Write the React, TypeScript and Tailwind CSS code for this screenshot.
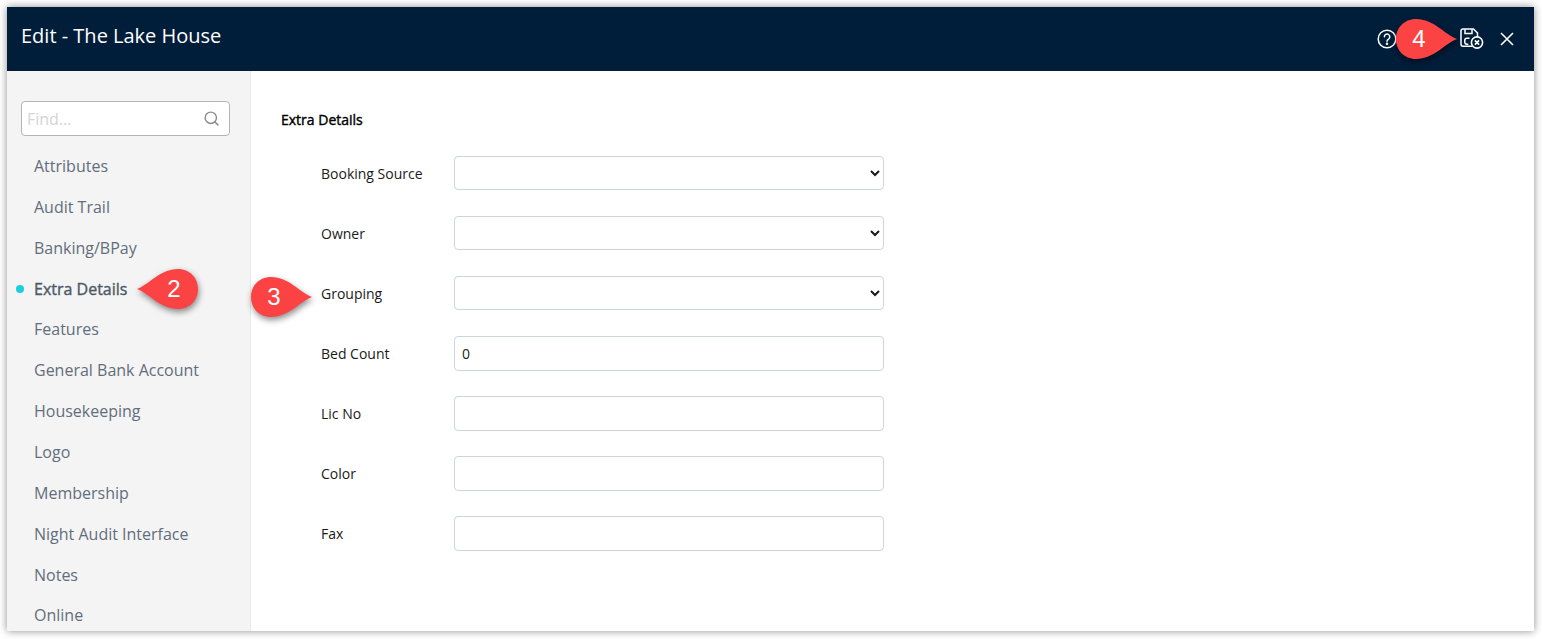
import { Search } from 'lucide-react';

const menuItems = [
  { label: 'Attributes', rowClass: 'h-[41px]' },
  { label: 'Audit Trail', rowClass: 'h-[41px]' },
  { label: 'Banking/BPay', rowClass: 'h-[41px]' },
  { label: 'Extra Details', rowClass: 'h-[40px] pt-[2px]', active: true },
  { label: 'Features', rowClass: 'h-[41px]' },
  { label: 'General Bank Account', rowClass: 'h-[41px]' },
  { label: 'Housekeeping', rowClass: 'h-[41px]' },
  { label: 'Logo', rowClass: 'h-[41px]' },
  { label: 'Membership', rowClass: 'h-[41px]' },
  { label: 'Night Audit Interface', rowClass: 'h-[41px]' },
  { label: 'Notes', rowClass: 'h-[40px] pt-[2px]' },
  { label: 'Online', rowClass: 'h-[41px]' },
];

const fields = [
  { label: 'Booking Source', type: 'select' },
  { label: 'Owner', type: 'select' },
  { label: 'Grouping', type: 'select' },
  { label: 'Bed Count', type: 'input', value: '0' },
  { label: 'Lic No', type: 'input' },
  { label: 'Color', type: 'input' },
  { label: 'Fax', type: 'input' },
];

// red teardrop marker used to annotate the screenshot
function Callout({ n, flip, className }: { n: number; flip?: boolean; className: string }) {
  return (
    <div className={`absolute h-[44px] w-[64px] ${className}`}>
      <svg width="64" height="44" viewBox="0 0 64 44" className="absolute inset-0 drop-shadow-[1px_3px_3px_rgba(0,0,0,0.45)]">
        <path
          d={
            flip
              ? 'M1 22 C14 17 24 2 42 2 C54 2 62 11 62 22 C62 33 54 42 42 42 C24 42 14 27 1 22 Z'
              : 'M63 22 C50 17 40 2 22 2 C10 2 2 11 2 22 C2 33 10 42 22 42 C40 42 50 27 63 22 Z'
          }
          fill="#fc4344"
        />
      </svg>
      <span
        className={`absolute top-0 flex h-[44px] w-[40px] items-center justify-center font-['Liberation_Sans',sans-serif] text-[24px] text-white ${
          flip ? 'left-[18px]' : 'left-[5px]'
        }`}
      >
        {n}
      </span>
    </div>
  );
}

function SaveCloseIcon() {
  return (
    <svg width="24" height="22" viewBox="0 0 24 22" fill="none" stroke="white" strokeWidth="1.5">
      <path d="M12 18.2H3a2 2 0 0 1-2-2V3a2 2 0 0 1 2-2h10.5L17.5 5v4" strokeLinejoin="round" />
      <path d="M5 1.2v4.3h7V1.2" />
      <path d="M9.5 10.2H6.8a2 2 0 0 0-2 2v2a2 2 0 0 0 2 2h1.5" />
      <circle cx="17" cy="14.5" r="5.6" strokeWidth="1.6" />
      <path d="M14.9 12.4l4.2 4.2M19.1 12.4l-4.2 4.2" strokeWidth="1.6" />
    </svg>
  );
}

export default function App() {
  return (
    <div className="relative h-[639px] w-[1542px] overflow-hidden bg-white pl-[7px] pt-[7px] font-['Open_Sans',sans-serif]">
      <div className="flex h-[624px] w-[1527px] flex-col bg-white shadow-[0_0_8px_rgba(0,0,0,0.45)]">
        {/* Header */}
        <div className="flex h-[64px] shrink-0 items-center justify-between bg-[#001d3a] pl-[14px] pr-[19px] text-white">
          <h1 className="mb-[7px] text-[20px] leading-none">Edit - The Lake House</h1>
          <div className="mt-[0px] flex items-center">
            <svg width="20" height="20" viewBox="0 0 20 20" fill="none" stroke="white" strokeWidth="1.5" className="mr-[63px]">
              <circle cx="10" cy="10" r="8.8" />
              <path d="M7.4 7.8a2.7 2.7 0 1 1 4.2 2.2c-1 .7-1.6 1.1-1.6 2.3" strokeLinecap="round" />
              <circle cx="10" cy="14.8" r="0.5" fill="white" />
            </svg>
            <SaveCloseIcon />
            <svg width="16" height="16" viewBox="0 0 16 16" fill="none" stroke="white" strokeWidth="1.6" className="ml-[15px]">
              <path d="M2 2l12 12M14 2L2 14" />
            </svg>
          </div>
        </div>

        <div className="flex min-h-0 flex-1">
          {/* Sidebar */}
          <aside className="w-[244px] shrink-0 overflow-hidden border-r border-[#e9e9e9] bg-[#f4f4f4] pl-[14px] pt-[30px]">
            <div className="flex h-[35px] w-[209px] items-center justify-between rounded-[4px] border border-[#b5b5b5] bg-white pl-[5px] pr-[9px]">
              <span className="text-[16px] text-[#d4d4d4]">Find...</span>
              <Search size={17} className="text-[#8a8a8a]" />
            </div>
            <ul className="mt-[9px]">
              {menuItems.map((item) => (
                <li
                  key={item.label}
                  className={`relative flex items-center pl-[13px] text-[16px] ${item.rowClass} ${
                    item.active ? 'text-[#4f5a68] [-webkit-text-stroke:0.4px_#4f5a68]' : 'text-[#626e7c]'
                  }`}
                >
                  {item.active && <span className="absolute left-[-5px] top-[17px] h-[8px] w-[8px] rounded-full bg-[#1bcfdc]" />}
                  {item.label}
                </li>
              ))}
            </ul>
          </aside>

          {/* Form */}
          <main className="flex-1 pl-[30px] pt-[39px] text-[14px] text-[#1a1a1a]">
            <h2 className="text-[14px] leading-[20px] text-black [-webkit-text-stroke:0.4px_#000]">Extra Details</h2>
            <div className="mt-[26px] flex flex-col gap-[25px] pl-[40px]">
              {fields.map((f) => (
                <div key={f.label} className="flex h-[35px] items-center">
                  <label className="w-[133px] shrink-0">{f.label}</label>
                  {f.type === 'select' ? (
                    <select className="h-[34px] w-[430px] self-start rounded-[4px] border border-[#ced4da] bg-white px-[4px] text-[14px]" />
                  ) : (
                    <input
                      readOnly
                      value={f.value ?? ''}
                      className="h-[35px] w-[430px] rounded-[4px] border border-[#ced4da] bg-white px-[7px] text-[14px] text-[#222]"
                    />
                  )}
                </div>
              ))}
            </div>
          </main>
        </div>
      </div>

      <Callout n={2} flip className="left-[136px] top-[267px]" />
      <Callout n={3} className="left-[249px] top-[275px]" />
      <Callout n={4} className="left-[1394px] top-[17px]" />
    </div>
  );
}
